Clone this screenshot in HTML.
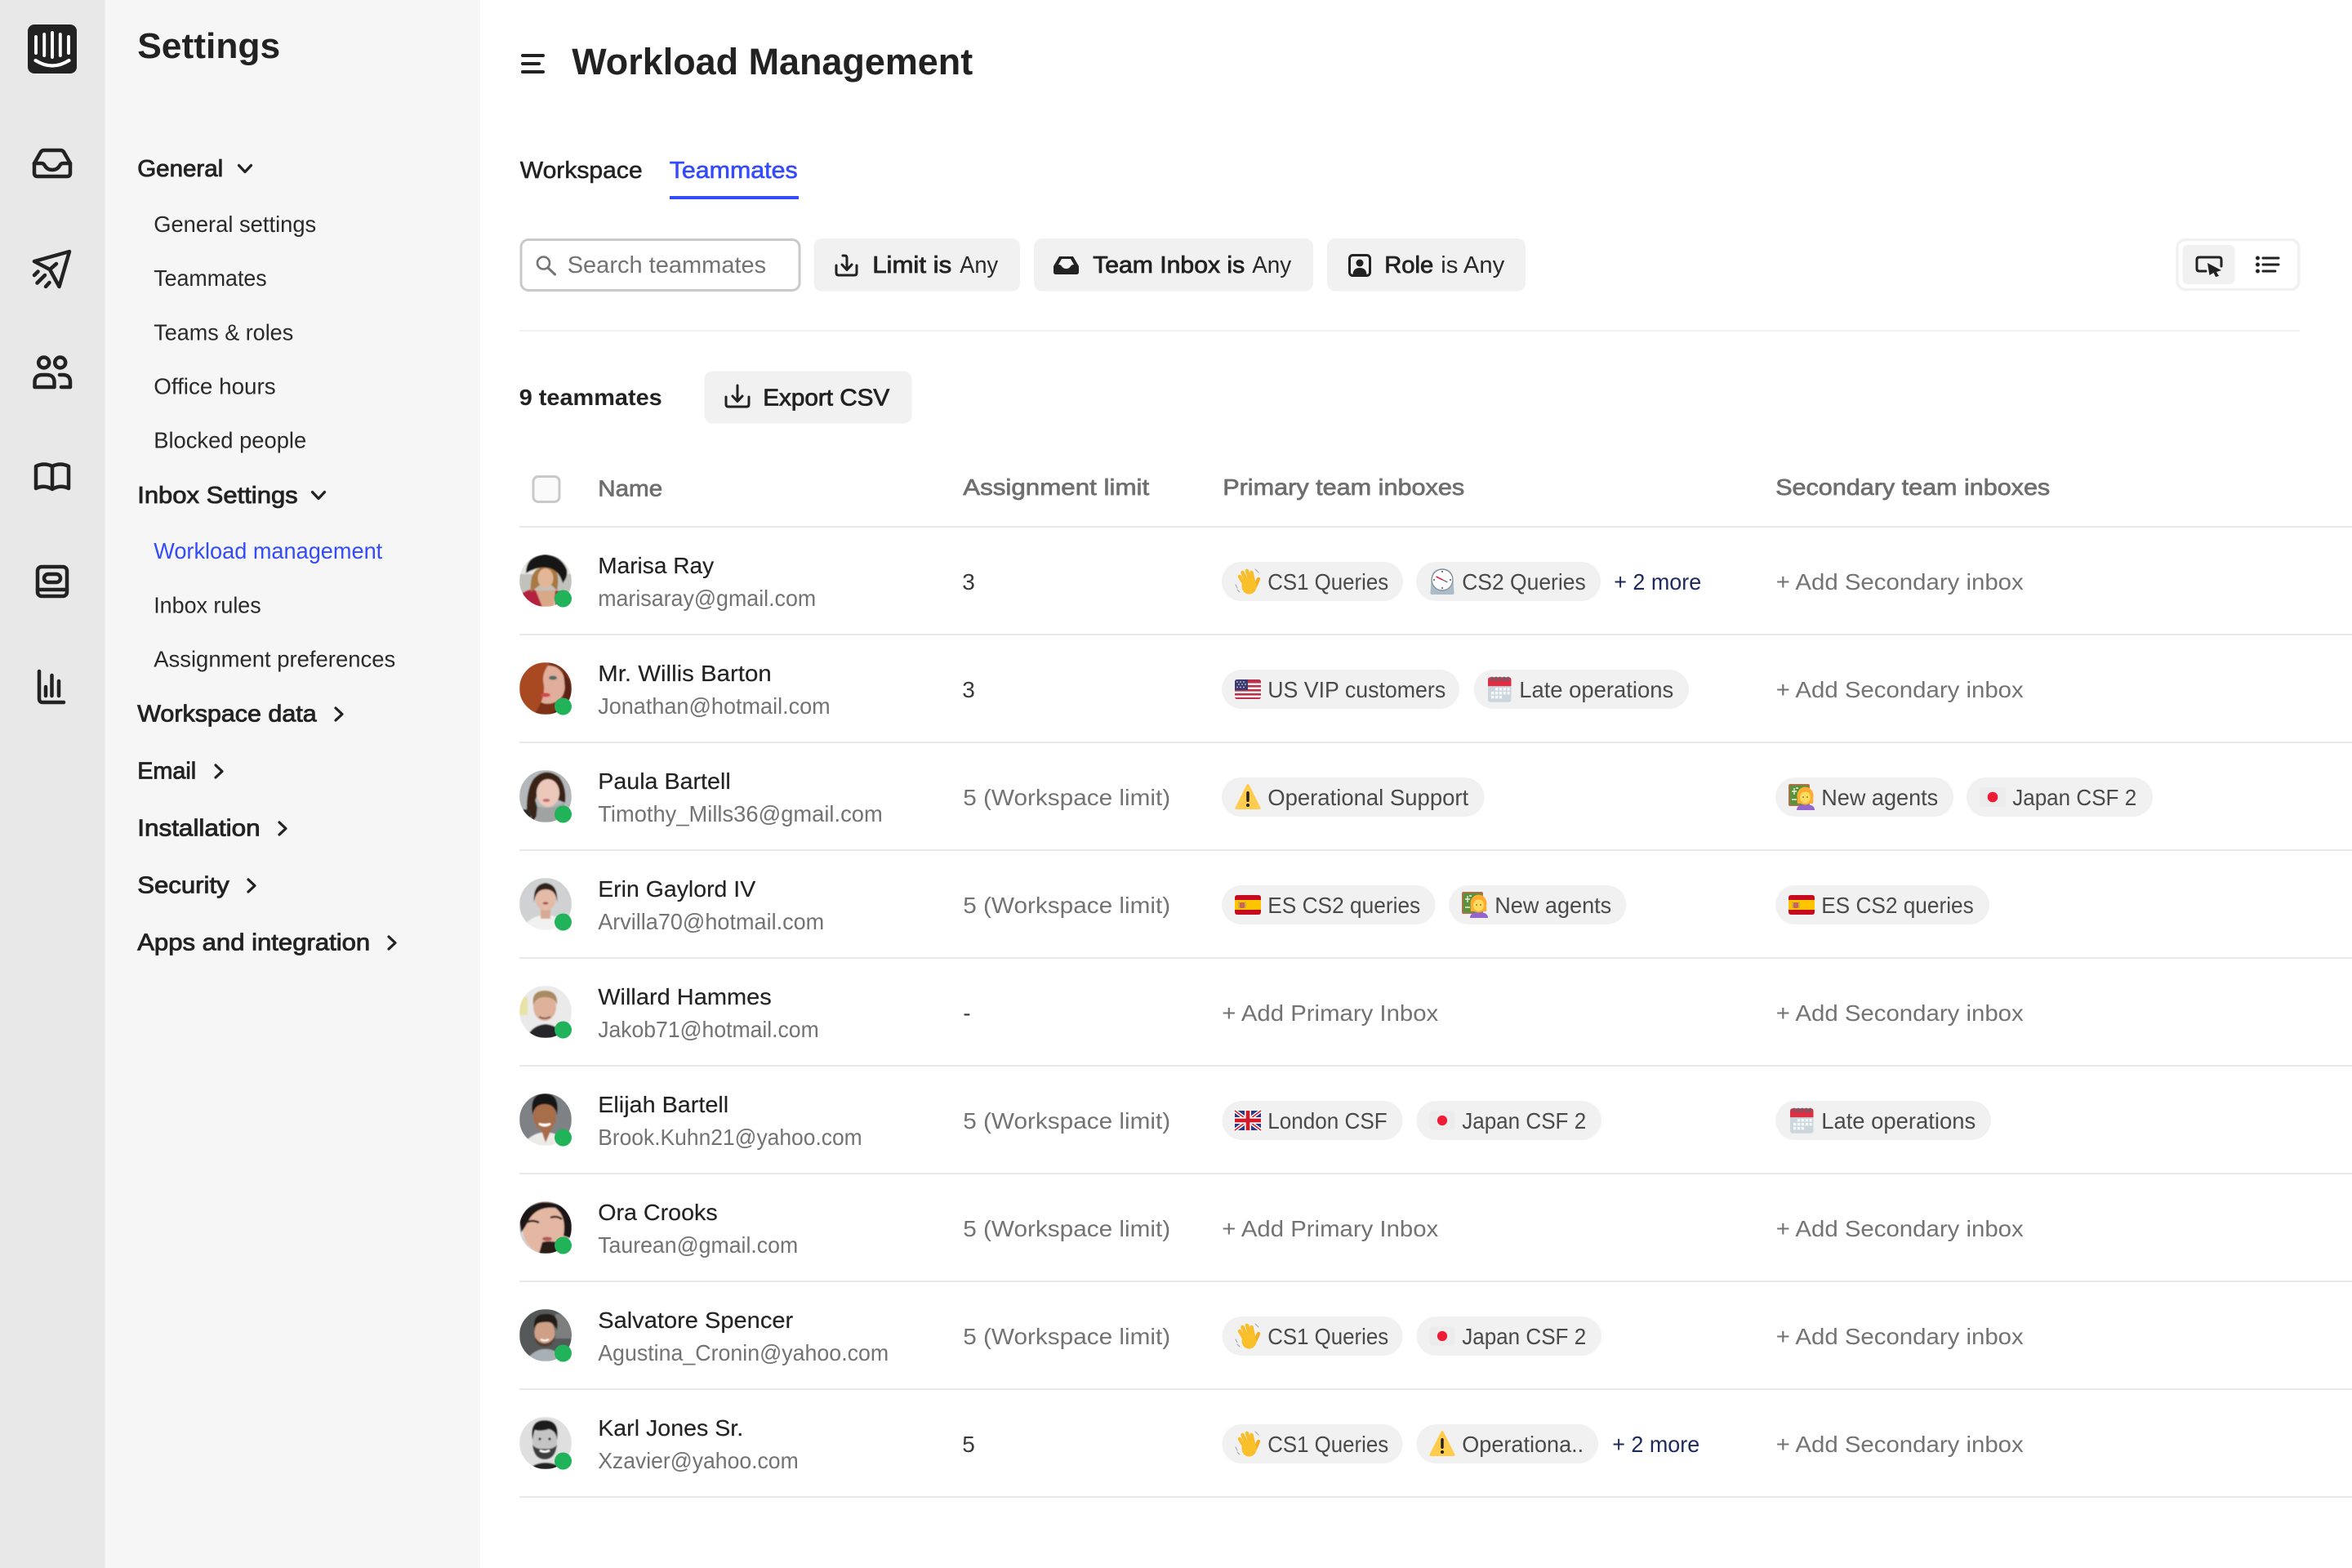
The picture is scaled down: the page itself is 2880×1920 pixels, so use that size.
<!DOCTYPE html>
<html lang="en">
<head>
<meta charset="utf-8">
<title>Workload Management</title>
<style>
html,body{margin:0;padding:0;background:#fff;width:2880px;height:1920px;overflow:hidden}
svg{display:block}
text{font-family:"Liberation Sans",Arial,sans-serif;fill:#222;white-space:pre;transform:translateX(-.8px)}
.nav{font-size:27.5px;fill:#2a2a2a;transform:translate(-.8px,.8px)}
.hd{font-size:29px;stroke:#222;stroke-width:.85}
.nm{font-size:28px;fill:#222;stroke:#222;stroke-width:.15}
.em{font-size:27.5px;fill:#737373}
.lm{font-size:28px;fill:#737373}
.dk{font-size:28px;fill:#3a3a3a}
.tg{font-size:27.5px;fill:#4a4a4a}
.add{font-size:28px;fill:#737373}
.mr{font-size:27.5px;fill:#1e2a5e}
.th{font-size:28px;fill:#6e6e6e;stroke:#6e6e6e;stroke-width:.7}
.ch{font-size:28.5px;fill:#222;stroke:#222;stroke-width:.8}
.ca{font-size:28.5px;fill:#2a2a2a}
.p{fill:#f1f1f1}
.ln{fill:#e8e8e8}
.ri{fill:none;stroke:#222;stroke-width:4.5;stroke-linecap:round;stroke-linejoin:round}
.ic{fill:none;stroke:#222;stroke-width:3;stroke-linecap:round;stroke-linejoin:round}
.cv{fill:none;stroke:#222;stroke-width:3.2;stroke-linecap:round;stroke-linejoin:round}
.on{fill:#20b35a}
</style>
</head>
<body>
<svg xmlns="http://www.w3.org/2000/svg" width="2880" height="1920" viewBox="0 0 2880 1920">
<defs>
<clipPath id="av"><circle cx="0" cy="0" r="32"/></clipPath>
<filter id="sf" x="-10%" y="-10%" width="120%" height="120%"><feGaussianBlur stdDeviation=".7"/></filter>
<symbol id="wave" viewBox="0 0 32 32" overflow="visible">
<g stroke-linecap="round" fill="none">
<path d="M12 20L6 10M15 17L9.500 5M19 16L15 3M23 17L20.500 5" stroke="#f8bd2a" stroke-width="4.600"/>
<path d="M25 22L29 13" stroke="#f5ae1f" stroke-width="4.400"/>
<path d="M1 20L3 24M3 26L6 29M25 1L29 5" stroke="#9aa0a6" stroke-width="1"/>
</g>
<ellipse cx="17.500" cy="22" rx="9" ry="9.600" fill="#f9c02c"/>
</symbol>
<symbol id="clock" viewBox="0 0 31 32" overflow="visible">
<path d="M2 14Q2 1 15.500 0Q29 1 29 14L30 30Q30 32 28 32H3Q1 32 1 30Z" fill="#a9bcc8"/>
<circle cx="15.500" cy="14" r="13.500" fill="#7d8a92"/>
<circle cx="15.500" cy="14" r="12.300" fill="#fff"/>
<path d="M15.500 3v2M15.500 23v2M4.500 14h2M24.500 14h2" stroke="#555" stroke-width="1.500"/>
<path d="M8 10L16 14" stroke="#dd2e44" stroke-width="1.800"/>
<path d="M16 14L22 17" stroke="#555" stroke-width="1.100"/>
</symbol>
<symbol id="us" viewBox="0 0 32 24" overflow="visible">
<rect width="32" height="24" rx="3" fill="#eee"/>
<path d="M0 2h32v2.500H0zM0 7h32v2.500H0zM0 12h32v2.500H0zM0 17h32v2.500H0zM3 0h26a3 3 0 0 1 3 2H0a3 3 0 0 1 3-2zM0 22h32a3 3 0 0 1-3 2H3a3 3 0 0 1-3-2z" fill="#b8324a"/>
<path d="M3 0h13v13H0V3a3 3 0 0 1 3-3z" fill="#3c3b6e"/>
<g fill="#cfd3e6"><circle cx="3" cy="3" r=".9"/><circle cx="7" cy="3" r=".9"/><circle cx="11" cy="3" r=".9"/><circle cx="5" cy="6" r=".9"/><circle cx="9" cy="6" r=".9"/><circle cx="13" cy="6" r=".9"/><circle cx="3" cy="9.500" r=".9"/><circle cx="7" cy="9.500" r=".9"/><circle cx="11" cy="9.500" r=".9"/></g>
</symbol>
<symbol id="es" viewBox="0 0 32 24" overflow="visible">
<rect width="32" height="24" rx="3" fill="#c60b1e"/>
<rect y="6" width="32" height="12" fill="#ffc400"/>
<rect x="6" y="9" width="6" height="7" rx="1" fill="#c8645a"/>
<path d="M5 8v8M13 8v8" stroke="#a89a70" stroke-width="1"/>
</symbol>
<symbol id="uk" viewBox="0 0 32 24" overflow="visible">
<rect width="32" height="24" rx="2" fill="#283a80"/>
<path d="M0 0L32 24M32 0L0 24" stroke="#fff" stroke-width="4.500"/>
<path d="M0 0L32 24M32 0L0 24" stroke="#cf1b2b" stroke-width="1.500"/>
<path d="M16 0V24M0 12H32" stroke="#fff" stroke-width="8"/>
<path d="M16 0V24M0 12H32" stroke="#cf1b2b" stroke-width="4.800"/>
</symbol>
<symbol id="jp" viewBox="0 0 32 24" overflow="visible">
<rect width="32" height="24" rx="3" fill="#ececec"/>
<circle cx="16" cy="12" r="6.300" fill="#ee1b35"/>
</symbol>
<symbol id="cal" viewBox="0 0 29 32" overflow="visible">
<rect y="1" width="29" height="31" rx="3" fill="#ccd6dd"/>
<path d="M0 12V4a3 3 0 0 1 3-3h23a3 3 0 0 1 3 3v8z" fill="#dd2e44"/>
<g fill="none" stroke="#58666e" stroke-width="1.200"><path d="M4 6V2a1 1 0 0 1 2 0v4M9 6V2a1 1 0 0 1 2 0v4M14 6V2a1 1 0 0 1 2 0v4M19 6V2a1 1 0 0 1 2 0v4M24 6V2a1 1 0 0 1 2 0v4"/></g>
<g fill="#f5f8fa"><rect x="9" y="14" width="3.500" height="3.500"/><rect x="14" y="14" width="3.500" height="3.500"/><rect x="19" y="14" width="3.500" height="3.500"/><rect x="24" y="14" width="3" height="3.500"/><rect x="4" y="19" width="3.500" height="3.500"/><rect x="9" y="19" width="3.500" height="3.500"/><rect x="14" y="19" width="3.500" height="3.500"/><rect x="19" y="19" width="3.500" height="3.500"/><rect x="24" y="19" width="3" height="3.500"/><rect x="4" y="24" width="3.500" height="3.500"/><rect x="9" y="24" width="3.500" height="3.500"/><rect x="14" y="24" width="3.500" height="3.500"/></g>
</symbol>
<symbol id="warn" viewBox="0 0 31 32" overflow="visible">
<path d="M15.500 0Q16.500 0 17.500 2L31 29Q31.500 31 29 31H2Q-.5 31 0 29L13.500 2Q14.500 0 15.500 0Z" fill="#ffcc4d"/>
<rect x="13.800" y="9" width="3.400" height="13" rx="1.700" fill="#231f20"/>
<circle cx="15.500" cy="26" r="2" fill="#231f20"/>
</symbol>
<symbol id="tea" viewBox="0 0 32 32" overflow="visible">
<rect width="26" height="27" rx="2" fill="#c1694f"/>
<rect x="1.500" y="1.500" width="23" height="24" fill="#5c913b"/>
<path d="M7 5v8M4 9h6M4 19h6M9 5h3" stroke="#e6f0dc" stroke-width="1.400"/>
<path d="M10 32Q10 25 21 25Q32 25 32 32Z" fill="#9266cc"/>
<ellipse cx="20.500" cy="14.500" rx="10" ry="11" fill="#ffac33"/>
<path d="M11 24Q10 16 12 13H29Q31 18 30 24Z" fill="#ffac33"/>
<ellipse cx="20.500" cy="16.500" rx="6.500" ry="7" fill="#ffdc5d"/>
<circle cx="18" cy="16" r=".8" fill="#60352a"/><circle cx="23" cy="16" r=".8" fill="#60352a"/>
</symbol>
</defs>

<!-- Backgrounds -->
<rect x="0" y="0" width="2880" height="1920" fill="#fff"/>
<rect x="0" y="0" width="128.500" height="1920" fill="#e8e8e8"/>
<rect x="128.500" y="0" width="459.500" height="1920" fill="#f6f6f6"/>

<!-- Rail logo -->
<rect x="34" y="30" width="60" height="60" rx="8" fill="#222"/>
<g fill="none" stroke="#fff" stroke-width="3.900" stroke-linecap="round">
<path d="M44 45V65M54.200 42V68M64 40V70M73.800 42V68M84 45V65"/>
<path d="M43.500 74Q64 87 84.500 74" stroke-width="4.200"/>
</g>

<!-- Rail icons -->
<path class="ri" d="M42 200L50 186Q51.500 184 54 184H74Q76.500 184 78 186L86 200V212Q86 216 82 216H46Q42 216 42 212Z"/>
<path class="ri" d="M42 200H51Q53.500 200 55 203Q58 208 64 208Q70 208 73 203Q74.500 200 77 200H86"/>
<path class="ri" d="M85 308L42 320L61 330L72.500 351Z"/>
<path class="ri" d="M61 330L69 323M42 337L46.500 332.500M45.500 346.500L55 337M56 351L60.500 346" stroke-width="4"/>
<circle class="ri" cx="53.700" cy="444" r="6.500"/>
<circle class="ri" cx="73.700" cy="444" r="6.500"/>
<path class="ri" d="M42.500 474V468Q42.500 459 52 459H57Q66.500 459 66.500 468V474Z"/>
<path class="ri" d="M73 459H77Q86 459 86 468V474H75"/>
<path class="ri" d="M44 598V571Q54 566 64 571Q74 566 84 571V598Q74 593 64 599Q54 593 44 598Z"/>
<path class="ri" d="M64 571V598" stroke-width="3.500"/>
<rect class="ri" x="46" y="694" width="36" height="36" rx="5"/>
<rect class="ri" x="54" y="703" width="20" height="10" rx="5" stroke-width="4"/>
<path class="ri" d="M46 722H82" stroke-width="4"/>
<path class="ri" d="M48 822V855Q48 860 52 860H78"/>
<path class="ri" d="M56 841V852M63.500 827V852M72 834V852" stroke-width="4"/>

<!-- Settings sidebar -->
<text x="169" y="71" font-size="44" font-weight="700" textLength="175" lengthAdjust="spacingAndGlyphs">Settings</text>
<text class="hd" x="169" y="216" textLength="105" lengthAdjust="spacingAndGlyphs">General</text>
<path class="cv" d="M292.500 202.500L300 210.500L307.500 202.500"/>
<text class="nav" x="189" y="283" textLength="199" lengthAdjust="spacingAndGlyphs">General settings</text>
<text class="nav" x="189" y="349" textLength="138.500" lengthAdjust="spacingAndGlyphs">Teammates</text>
<text class="nav" x="189" y="415.500" textLength="171" lengthAdjust="spacingAndGlyphs">Teams &amp; roles</text>
<text class="nav" x="189" y="481.500" textLength="149.500" lengthAdjust="spacingAndGlyphs">Office hours</text>
<text class="nav" x="189" y="547.500" textLength="187" lengthAdjust="spacingAndGlyphs">Blocked people</text>
<text class="hd" x="169" y="616" textLength="196.500" lengthAdjust="spacingAndGlyphs">Inbox Settings</text>
<path class="cv" d="M382.500 602.500L390 610.500L397.500 602.500"/>
<text class="nav" x="189" y="683" textLength="280" lengthAdjust="spacingAndGlyphs" style="fill:#334bfa">Workload management</text>
<text class="nav" x="189" y="749.500" textLength="131.500" lengthAdjust="spacingAndGlyphs">Inbox rules</text>
<text class="nav" x="189" y="815.500" textLength="296" lengthAdjust="spacingAndGlyphs">Assignment preferences</text>
<text class="hd" x="169" y="883.500" textLength="219.500" lengthAdjust="spacingAndGlyphs">Workspace data</text>
<path class="cv" d="M411 867L419 874.500L411 882"/>
<text class="hd" x="169" y="953.500" textLength="72" lengthAdjust="spacingAndGlyphs">Email</text>
<path class="cv" d="M264 937L272 944.500L264 952"/>
<text class="hd" x="169" y="1023.500" textLength="150.500" lengthAdjust="spacingAndGlyphs">Installation</text>
<path class="cv" d="M342 1007L350 1014.500L342 1022"/>
<text class="hd" x="169" y="1093.500" textLength="112.500" lengthAdjust="spacingAndGlyphs">Security</text>
<path class="cv" d="M304 1077L312 1084.500L304 1092"/>
<text class="hd" x="169" y="1163.500" textLength="285" lengthAdjust="spacingAndGlyphs">Apps and integration</text>
<path class="cv" d="M476 1147L484 1154.500L476 1162"/>

<!-- Title -->
<path d="M640 68H665M640 78H660M640 88H665" fill="none" stroke="#222" stroke-width="4" stroke-linecap="round"/>
<text x="701" y="91" font-size="45" font-weight="700" textLength="491" lengthAdjust="spacingAndGlyphs">Workload Management</text>

<!-- Tabs -->
<text class="ch" x="637.500" y="218" textLength="150" lengthAdjust="spacingAndGlyphs" style="stroke-width:.5">Workspace</text>
<text class="ch" x="820.500" y="218" textLength="157" lengthAdjust="spacingAndGlyphs" style="fill:#334bfa;stroke:#334bfa;stroke-width:.6">Teammates</text>
<rect x="820" y="240" width="158" height="4" fill="#334bfa"/>

<!-- Filters -->
<rect x="638" y="293.500" width="341" height="62" rx="9" fill="#fff" stroke="#c9c9c9" stroke-width="3"/>
<circle cx="665.500" cy="322" r="7.500" fill="none" stroke="#737373" stroke-width="2.600"/>
<path d="M671 328L679.500 336" stroke="#737373" stroke-width="3" stroke-linecap="round"/>
<text x="695.500" y="334" font-size="28.500" style="fill:#737373" textLength="243.500" lengthAdjust="spacingAndGlyphs">Search teammates</text>

<rect class="p" x="996.500" y="292" width="252.500" height="64.500" rx="10"/>
<path class="ic" d="M1024 325V334Q1024 337 1027 337H1046Q1049 337 1049 334V325"/>
<path class="ic" d="M1032 313H1034.500Q1037 313 1037 316V330M1031 324L1037 330.500L1043 324"/>
<text class="ch" x="1069" y="334" textLength="97" lengthAdjust="spacingAndGlyphs">Limit is</text>
<text class="ca" x="1176" y="334" textLength="47" lengthAdjust="spacingAndGlyphs">Any</text>

<rect class="p" x="1266" y="292" width="342" height="64.500" rx="10"/>
<path d="M1297 314H1314L1321 326V333Q1321 336 1318 336H1293Q1290 336 1290 333V326Z" fill="#222"/>
<path d="M1296 324L1300 317H1311L1315 324Q1312 324 1311 326Q1309 329 1305.500 329Q1302 329 1300 326Q1299 324 1296 324Z" fill="#f1f1f1"/>
<text class="ch" x="1339" y="334" textLength="186" lengthAdjust="spacingAndGlyphs">Team Inbox is</text>
<text class="ca" x="1534" y="334" textLength="48" lengthAdjust="spacingAndGlyphs">Any</text>

<rect class="p" x="1625" y="292" width="243" height="64.500" rx="10"/>
<rect class="ic" x="1652.500" y="312.500" width="25" height="25" rx="4"/>
<circle cx="1665" cy="322" r="4.500" fill="#222"/>
<path d="M1656.500 337Q1656.500 328 1665 328Q1673.500 328 1673.500 337Z" fill="#222"/>
<text class="ch" x="1696" y="334" textLength="60" lengthAdjust="spacingAndGlyphs">Role</text>
<text class="ca" x="1765" y="334" textLength="78" lengthAdjust="spacingAndGlyphs">is Any</text>

<!-- View toggle -->
<rect x="2666" y="293.500" width="149" height="61" rx="10" fill="#fff" stroke="#f1f1f1" stroke-width="3.500"/>
<rect class="p" x="2672.500" y="300" width="64" height="48" rx="6"/>
<path class="ic" d="M2701 332H2693Q2690 332 2690 329V318Q2690 315 2693 315H2717Q2720 315 2720 318V326"/>
<path d="M2703 322L2720 331L2714 333L2717 338L2713 339L2710.500 334L2705.500 337Z" fill="#222"/>
<circle cx="2764.500" cy="316" r="2.500" fill="#222"/><circle cx="2764.500" cy="324" r="2.500" fill="#222"/><circle cx="2764.500" cy="332" r="2.500" fill="#222"/>
<path d="M2771 316H2790M2771 324H2790M2771 332H2786" fill="none" stroke="#222" stroke-width="3" stroke-linecap="round"/>

<rect x="636" y="404" width="2180" height="2" fill="#f1f1f1"/>

<!-- Count + export -->
<text x="636.500" y="496" font-size="28" font-weight="700" textLength="175" lengthAdjust="spacingAndGlyphs">9 teammates</text>
<rect class="p" x="862.500" y="454.500" width="254" height="64" rx="10"/>
<path class="ic" d="M889 486V495Q889 498 892 498H914Q917 498 917 495V486M903 472V491M897 485L903 491.500L909 485"/>
<text class="ch" x="935" y="496.500" textLength="155" lengthAdjust="spacingAndGlyphs">Export CSV</text>

<!-- Table header -->
<rect x="653" y="583.500" width="32" height="31" rx="6" fill="#fafafa" stroke="#c9c9c9" stroke-width="3"/>
<text class="th" x="733" y="607.500" textLength="79" lengthAdjust="spacingAndGlyphs">Name</text>
<text class="th" x="1180" y="606" textLength="228" lengthAdjust="spacingAndGlyphs">Assignment limit</text>
<text class="th" x="1498" y="606" textLength="296" lengthAdjust="spacingAndGlyphs">Primary team inboxes</text>
<text class="th" x="2175" y="606" textLength="336" lengthAdjust="spacingAndGlyphs">Secondary team inboxes</text>

<!-- Row lines -->
<rect class="ln" x="636" y="644" width="2244" height="2"/>
<rect class="ln" x="636" y="776" width="2244" height="2"/>
<rect class="ln" x="636" y="908" width="2244" height="2"/>
<rect class="ln" x="636" y="1040" width="2244" height="2"/>
<rect class="ln" x="636" y="1172" width="2244" height="2"/>
<rect class="ln" x="636" y="1304" width="2244" height="2"/>
<rect class="ln" x="636" y="1436" width="2244" height="2"/>
<rect class="ln" x="636" y="1568" width="2244" height="2"/>
<rect class="ln" x="636" y="1700" width="2244" height="2"/>
<rect class="ln" x="636" y="1832" width="2244" height="2"/>

<!-- Avatars -->
<g transform="translate(668,711)" clip-path="url(#av)"><g filter="url(#sf)">
<rect x="-32" y="-32" width="64" height="64" fill="#e6e6e2"/>
<rect x="-32" y="-8" width="64" height="28" fill="#c2c2bc"/>
<path d="M-32 32V18Q-20 8 -12 12L-2 32ZM10 12Q22 12 32 20V32H12Z" fill="#b4203f"/>
<path d="M-12 12H12L10 32H-4Z" fill="#d8a888"/>
<path d="M-18 14Q-20 -12 -6 -16H10Q18 -8 14 12L8 6H-8Z" fill="#a8793f"/>
<ellipse cx="0" cy="-3" rx="9.500" ry="12" fill="#e4b698"/>
<path d="M-24 -9Q-24 -30 -2 -32Q18 -32 26 -14Q28 -5 21 3Q17 -11 6 -15Q-8 -19 -24 -9Z" fill="#121212"/>
</g></g>
<g transform="translate(668,843)" clip-path="url(#av)"><g filter="url(#sf)">
<rect x="-32" y="-32" width="64" height="64" fill="#7c3218"/>
<path d="M-2 -28Q22 -30 24 -6Q24 14 8 18Q-8 22 -12 6Z" fill="#e2ae9c"/>
<path d="M-32 -32H6Q-6 -18 -2 -4Q0 12 -14 32H-32Z" fill="#a84822"/>
<path d="M22 -20Q32 -8 32 4V32H6Q22 20 24 2Z" fill="#5b2412"/>
<path d="M-32 14Q-20 26 -14 32H-32Z" fill="#e8dcc4"/>
<ellipse cx="9" cy="-13" rx="5" ry="2.500" fill="#4d6a66"/>
<ellipse cx="0" cy="8" rx="6" ry="2.500" fill="#cf4a4f"/>
</g></g>
<g transform="translate(668,975)" clip-path="url(#av)"><g filter="url(#sf)">
<rect x="-32" y="-32" width="64" height="64" fill="#b4b8ba"/>
<path d="M-22 32Q-26 -6 -14 -22Q0 -36 16 -24Q26 -12 24 8L14 4V-12L-6 -14Z" fill="#3a2418"/>
<path d="M-16 32Q-22 10 -16 -6L-8 20Z" fill="#3a2418"/>
<ellipse cx="3" cy="-4" rx="14" ry="17" fill="#ecc8ba"/>
<path d="M-10 12Q6 18 22 8Q30 22 26 32H-12Z" fill="#9fa3a1"/>
<ellipse cx="1" cy="5" rx="4.500" ry="2" fill="#c86a72"/>
<rect x="-32" y="16" width="14" height="16" fill="#2f2a28"/>
</g></g>
<g transform="translate(668,1107)" clip-path="url(#av)"><g filter="url(#sf)">
<rect x="-32" y="-32" width="64" height="64" fill="#cfd1d2"/>
<path d="M-32 32Q-16 12 0 14Q16 12 32 32Z" fill="#f1f1f1"/>
<rect x="-6" y="6" width="12" height="12" fill="#d8aa94"/>
<ellipse cx="0" cy="-7" rx="12.500" ry="15" fill="#e3bba6"/>
<path d="M-14 -2Q-16 -24 0 -26Q16 -24 14 -2Q13 -18 0 -18Q-12 -18 -14 -2Z" fill="#33221b"/>
<ellipse cx="0" cy="-1" rx="3.500" ry="1.500" fill="#a84a50"/>
</g></g>
<g transform="translate(668,1239)" clip-path="url(#av)"><g filter="url(#sf)">
<rect x="-32" y="-32" width="64" height="64" fill="#eaeaea"/>
<rect x="-32" y="-18" width="10" height="22" fill="#e6e3a4"/>
<path d="M-24 32Q-16 16 0 15Q16 16 24 32Z" fill="#26262b"/>
<ellipse cx="-1" cy="-6" rx="14" ry="17" fill="#deb29a"/>
<path d="M-15 -8Q-18 -26 -1 -26Q16 -26 14 -8Q12 -18 -1 -18Q-12 -18 -15 -8Z" fill="#a98a60"/>
<path d="M-8 6Q-1 10 6 6" stroke="#8a5a48" stroke-width="2" fill="none"/>
</g></g>
<g transform="translate(668,1371)" clip-path="url(#av)"><g filter="url(#sf)">
<rect x="-32" y="-32" width="64" height="64" fill="#7f8284"/>
<path d="M-30 32Q-14 14 0 16Q14 14 30 32Z" fill="#ecebe8"/>
<path d="M-6 10H8L0 28Z" fill="#a86c48"/>
<ellipse cx="-1" cy="-4" rx="14" ry="18" fill="#a86d48"/>
<path d="M-16 -6Q-20 -32 -1 -32Q18 -32 14 -6Q11 -19 -1 -19Q-13 -19 -16 -6Z" fill="#191513"/>
<path d="M-8 5Q-1 10 6 5Q-1 7 -8 5Z" fill="#fff" stroke="#fff" stroke-width="2"/>
</g></g>
<g transform="translate(668,1503)" clip-path="url(#av)"><g filter="url(#sf)">
<rect x="-32" y="-32" width="64" height="64" fill="#d7d4d6"/>
<ellipse cx="0" cy="0" rx="28" ry="32" fill="#e4b7a2"/>
<path d="M-32 -8Q-26 -28 -4 -31Q22 -32 32 -14V14L22 10Q26 -14 12 -24Q-10 -26 -20 -10Q-26 2 -30 6Z" fill="#1c1817"/>
<path d="M-24 -6Q-16 -10 -8 -6M6 -12Q14 -15 20 -10" stroke="#2a1e1a" stroke-width="2.400" fill="none"/>
<path d="M-4 18Q12 14 26 24L14 32H-8Z" fill="#2a1a18"/>
<ellipse cx="2" cy="14" rx="6" ry="2.500" fill="#b75a5a"/>
</g></g>
<g transform="translate(668,1635)" clip-path="url(#av)"><g filter="url(#sf)">
<rect x="-32" y="-32" width="64" height="64" fill="#555858"/>
<rect x="12" y="-26" width="22" height="30" fill="#7d7f7e"/>
<path d="M-26 32Q-12 16 -1 17Q14 16 24 32Z" fill="#a9b0b5"/>
<ellipse cx="-1" cy="-3" rx="12.500" ry="16" fill="#cf9f86"/>
<path d="M-14 -8Q-16 -26 -1 -26Q18 -28 14 -6Q10 -18 -2 -16Q-12 -16 -14 -8Z" fill="#231c18"/>
<path d="M-13 2Q-12 14 -1 14Q10 14 11 2Q6 10 -1 10Q-8 10 -13 2Z" fill="#553f30"/>
<path d="M-6 5Q-1 8 4 5" stroke="#fff" stroke-width="2" fill="none"/>
</g></g>
<g transform="translate(668,1767)" clip-path="url(#av)"><g filter="url(#sf)">
<rect x="-32" y="-32" width="64" height="64" fill="#dfdfdf"/>
<path d="M-22 32Q-12 24 0 24Q12 24 22 32Z" fill="#222"/>
<ellipse cx="-1" cy="-2" rx="15" ry="19" fill="#c4c4c4"/>
<path d="M-16 -4Q-20 -28 -1 -28Q18 -28 14 -4Q13 -15 4 -17Q-6 -14 -13 -16Q-15 -10 -16 -4Z" fill="#1e1e1e"/>
<path d="M-16 2Q-14 20 -1 20Q12 20 14 2Q10 8 -1 7Q-12 8 -16 2Z" fill="#3c3c3c"/>
<path d="M-7 9Q-1 12 5 9" stroke="#fff" stroke-width="2.400" fill="none"/>
<circle cx="-7" cy="-5" r="1.600" fill="#222"/><circle cx="5" cy="-5" r="1.600" fill="#222"/>
</g></g>

<!-- Online dots -->
<circle class="on" cx="689.500" cy="733" r="10.500"/>
<circle class="on" cx="689.500" cy="865" r="10.500"/>
<circle class="on" cx="689.500" cy="997" r="10.500"/>
<circle class="on" cx="689.500" cy="1129" r="10.500"/>
<circle class="on" cx="689.500" cy="1261" r="10.500"/>
<circle class="on" cx="689.500" cy="1393" r="10.500"/>
<circle class="on" cx="689.500" cy="1525" r="10.500"/>
<circle class="on" cx="689.500" cy="1657" r="10.500"/>
<circle class="on" cx="689.500" cy="1789" r="10.500"/>

<!-- Names and emails -->
<text class="nm" x="733" y="702" textLength="142" lengthAdjust="spacingAndGlyphs">Marisa Ray</text>
<text class="em" x="733" y="742" textLength="267" lengthAdjust="spacingAndGlyphs">marisaray@gmail.com</text>
<text class="nm" x="733" y="834" textLength="212.500" lengthAdjust="spacingAndGlyphs">Mr. Willis Barton</text>
<text class="em" x="733" y="874" textLength="284.500" lengthAdjust="spacingAndGlyphs">Jonathan@hotmail.com</text>
<text class="nm" x="733" y="966" textLength="162.500" lengthAdjust="spacingAndGlyphs">Paula Bartell</text>
<text class="em" x="733" y="1006" textLength="348.500" lengthAdjust="spacingAndGlyphs">Timothy_Mills36@gmail.com</text>
<text class="nm" x="733" y="1098" textLength="193" lengthAdjust="spacingAndGlyphs">Erin Gaylord IV</text>
<text class="em" x="733" y="1138" textLength="277" lengthAdjust="spacingAndGlyphs">Arvilla70@hotmail.com</text>
<text class="nm" x="733" y="1230" textLength="212.500" lengthAdjust="spacingAndGlyphs">Willard Hammes</text>
<text class="em" x="733" y="1270" textLength="270.500" lengthAdjust="spacingAndGlyphs">Jakob71@hotmail.com</text>
<text class="nm" x="733" y="1362" textLength="160" lengthAdjust="spacingAndGlyphs">Elijah Bartell</text>
<text class="em" x="733" y="1402" textLength="323.500" lengthAdjust="spacingAndGlyphs">Brook.Kuhn21@yahoo.com</text>
<text class="nm" x="733" y="1494" textLength="146.500" lengthAdjust="spacingAndGlyphs">Ora Crooks</text>
<text class="em" x="733" y="1534" textLength="245" lengthAdjust="spacingAndGlyphs">Taurean@gmail.com</text>
<text class="nm" x="733" y="1626" textLength="239" lengthAdjust="spacingAndGlyphs">Salvatore Spencer</text>
<text class="em" x="733" y="1666" textLength="356" lengthAdjust="spacingAndGlyphs">Agustina_Cronin@yahoo.com</text>
<text class="nm" x="733" y="1758" textLength="178" lengthAdjust="spacingAndGlyphs">Karl Jones Sr.</text>
<text class="em" x="733" y="1798" textLength="245.500" lengthAdjust="spacingAndGlyphs">Xzavier@yahoo.com</text>

<!-- Assignment limit -->
<text class="dk" x="1179" y="722">3</text>
<text class="dk" x="1179" y="854">3</text>
<text class="lm" x="1180" y="986" textLength="254" lengthAdjust="spacingAndGlyphs">5 (Workspace limit)</text>
<text class="lm" x="1180" y="1118" textLength="254" lengthAdjust="spacingAndGlyphs">5 (Workspace limit)</text>
<text class="dk" x="1180" y="1250">-</text>
<text class="lm" x="1180" y="1382" textLength="254" lengthAdjust="spacingAndGlyphs">5 (Workspace limit)</text>
<text class="lm" x="1180" y="1514" textLength="254" lengthAdjust="spacingAndGlyphs">5 (Workspace limit)</text>
<text class="lm" x="1180" y="1646" textLength="254" lengthAdjust="spacingAndGlyphs">5 (Workspace limit)</text>
<text class="dk" x="1179" y="1778">5</text>

<!-- Row 1 -->
<rect class="p" x="1496" y="688" width="222" height="48" rx="24"/>
<use href="#wave" x="1512" y="696" width="32" height="32"/>
<text class="tg" x="1553" y="722" textLength="148" lengthAdjust="spacingAndGlyphs">CS1 Queries</text>
<rect class="p" x="1734" y="688" width="226" height="48" rx="24"/>
<use href="#clock" x="1750.500" y="696" width="31" height="32"/>
<text class="tg" x="1791" y="722" textLength="151.500" lengthAdjust="spacingAndGlyphs">CS2 Queries</text>
<text class="mr" x="1977" y="722" textLength="107" lengthAdjust="spacingAndGlyphs">+ 2 more</text>
<text class="add" x="2175.500" y="722" textLength="303" lengthAdjust="spacingAndGlyphs">+ Add Secondary inbox</text>

<!-- Row 2 -->
<rect class="p" x="1496" y="820" width="291" height="48" rx="24"/>
<use href="#us" x="1512" y="832" width="32" height="24"/>
<text class="tg" x="1553" y="854" textLength="218" lengthAdjust="spacingAndGlyphs">US VIP customers</text>
<rect class="p" x="1804.500" y="820" width="263.500" height="48" rx="24"/>
<use href="#cal" x="1822" y="828" width="28.500" height="32"/>
<text class="tg" x="1861" y="854" textLength="189" lengthAdjust="spacingAndGlyphs">Late operations</text>
<text class="add" x="2175.500" y="854" textLength="303" lengthAdjust="spacingAndGlyphs">+ Add Secondary inbox</text>

<!-- Row 3 -->
<rect class="p" x="1496" y="952" width="321.500" height="48" rx="24"/>
<use href="#warn" x="1512.500" y="960" width="31" height="32"/>
<text class="tg" x="1553" y="986" textLength="246" lengthAdjust="spacingAndGlyphs">Operational Support</text>
<rect class="p" x="2174" y="952" width="218" height="48" rx="24"/>
<use href="#tea" x="2190" y="960" width="32" height="32"/>
<text class="tg" x="2231" y="986" textLength="143" lengthAdjust="spacingAndGlyphs">New agents</text>
<rect class="p" x="2408" y="952" width="228" height="48" rx="24"/>
<use href="#jp" x="2424" y="964" width="32" height="24"/>
<text class="tg" x="2465" y="986" textLength="152" lengthAdjust="spacingAndGlyphs">Japan CSF 2</text>

<!-- Row 4 -->
<rect class="p" x="1496" y="1084" width="261.500" height="48" rx="24"/>
<use href="#es" x="1512" y="1096" width="32" height="24"/>
<text class="tg" x="1553" y="1118" textLength="187" lengthAdjust="spacingAndGlyphs">ES CS2 queries</text>
<rect class="p" x="1774" y="1084" width="217.500" height="48" rx="24"/>
<use href="#tea" x="1790" y="1092" width="32" height="32"/>
<text class="tg" x="1831" y="1118" textLength="143" lengthAdjust="spacingAndGlyphs">New agents</text>
<rect class="p" x="2174" y="1084" width="262" height="48" rx="24"/>
<use href="#es" x="2190" y="1096" width="32" height="24"/>
<text class="tg" x="2231" y="1118" textLength="186.500" lengthAdjust="spacingAndGlyphs">ES CS2 queries</text>

<!-- Row 5 -->
<text class="add" x="1497" y="1250" textLength="265" lengthAdjust="spacingAndGlyphs">+ Add Primary Inbox</text>
<text class="add" x="2175.500" y="1250" textLength="303" lengthAdjust="spacingAndGlyphs">+ Add Secondary inbox</text>

<!-- Row 6 -->
<rect class="p" x="1496.500" y="1348" width="221" height="48" rx="24"/>
<use href="#uk" x="1512" y="1360" width="32" height="24"/>
<text class="tg" x="1553" y="1382" textLength="146.500" lengthAdjust="spacingAndGlyphs">London CSF</text>
<rect class="p" x="1734.500" y="1348" width="226.500" height="48" rx="24"/>
<use href="#jp" x="1750.500" y="1360" width="31" height="24"/>
<text class="tg" x="1791" y="1382" textLength="152" lengthAdjust="spacingAndGlyphs">Japan CSF 2</text>
<rect class="p" x="2174" y="1348" width="264" height="48" rx="24"/>
<use href="#cal" x="2192" y="1356" width="28.500" height="32"/>
<text class="tg" x="2231" y="1382" textLength="189" lengthAdjust="spacingAndGlyphs">Late operations</text>

<!-- Row 7 -->
<text class="add" x="1497" y="1514" textLength="265" lengthAdjust="spacingAndGlyphs">+ Add Primary Inbox</text>
<text class="add" x="2175.500" y="1514" textLength="303" lengthAdjust="spacingAndGlyphs">+ Add Secondary inbox</text>

<!-- Row 8 -->
<rect class="p" x="1496.500" y="1612" width="221" height="48" rx="24"/>
<use href="#wave" x="1512" y="1620" width="32" height="32"/>
<text class="tg" x="1553" y="1646" textLength="148" lengthAdjust="spacingAndGlyphs">CS1 Queries</text>
<rect class="p" x="1734.500" y="1612" width="226.500" height="48" rx="24"/>
<use href="#jp" x="1750.500" y="1624" width="31" height="24"/>
<text class="tg" x="1791" y="1646" textLength="152" lengthAdjust="spacingAndGlyphs">Japan CSF 2</text>
<text class="add" x="2175.500" y="1646" textLength="303" lengthAdjust="spacingAndGlyphs">+ Add Secondary inbox</text>

<!-- Row 9 -->
<rect class="p" x="1496.500" y="1744" width="221" height="48" rx="24"/>
<use href="#wave" x="1512" y="1752" width="32" height="32"/>
<text class="tg" x="1553" y="1778" textLength="148" lengthAdjust="spacingAndGlyphs">CS1 Queries</text>
<rect class="p" x="1734.500" y="1744" width="222.500" height="48" rx="24"/>
<use href="#warn" x="1750.500" y="1752" width="31" height="32"/>
<text class="tg" x="1791" y="1778" textLength="149" lengthAdjust="spacingAndGlyphs">Operationa..</text>
<text class="mr" x="1975" y="1778" textLength="107" lengthAdjust="spacingAndGlyphs">+ 2 more</text>
<text class="add" x="2175.500" y="1778" textLength="303" lengthAdjust="spacingAndGlyphs">+ Add Secondary inbox</text>
</svg>
</body>
</html>
